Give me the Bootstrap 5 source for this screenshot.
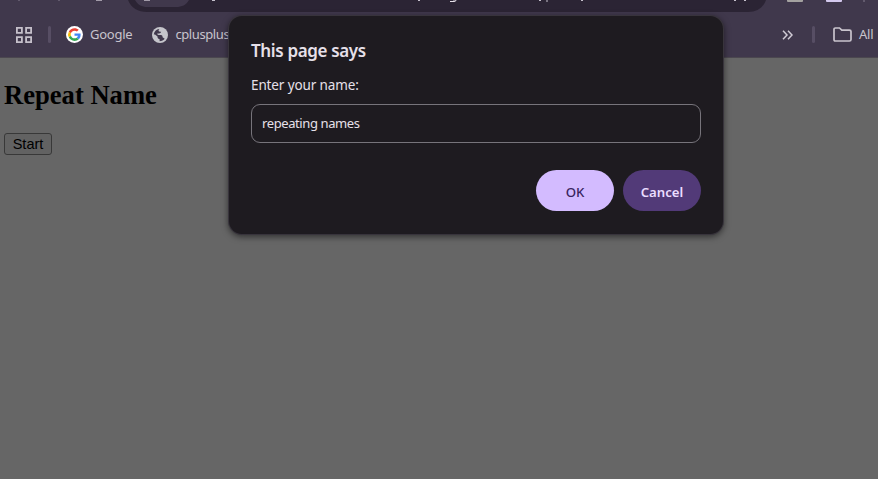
<!DOCTYPE html>
<html lang="en">
<head>
<meta charset="utf-8">
<meta name="viewport" content="width=device-width, initial-scale=1">
<title>Repeat Name</title>
<link href="https://cdn.jsdelivr.net/npm/bootstrap@5.3.0/dist/css/bootstrap.min.css" rel="stylesheet">
<style>
body{height:479px;background:#666;font-family:"Noto Sans","Open Sans",sans-serif;font-size:13px;color:#c8c4cd}
.browser-bar{height:58px;background:#40384c;border-bottom:1px solid #4b474f}
.toolbar-strip{height:12px;flex:none}
.toolbar-strip svg,.bookmark-row svg{display:block;flex:none}
.bookmark-row{height:45px;padding-left:16px}
.bookmark-label{font-size:13px;line-height:18px;white-space:nowrap;letter-spacing:-.25px;margin-left:7px;padding-bottom:2px}
.bookmark-label.site{letter-spacing:-.4px}
.bar-split{width:3px;height:17px;border-radius:2px;background:#574e64;flex:none}
.google-icon{margin-left:15px}
.site-icon{margin-left:20px}
.bookmark-end{width:96px}
.end-split{margin-left:19px}
.folder-icon{margin-left:18px}
.page-body{padding:21px 4px}
.page-body h2{font:bold 26.6px/32px "Liberation Serif",serif;color:#000;margin:0 0 22px}
.start-btn{font:14.5px/18px "Liberation Sans",sans-serif;color:#000;background:#626262;border:1px solid #383838;border-radius:3px;width:48px;height:22px;padding:0 0 1px}
.prompt{position:absolute;left:229px;top:16px;width:494px;height:218px;background:#1e1b20;border-radius:13px;padding:23px 22px;box-shadow:0 0 0 1px #38343c,0 2px 6px 1px rgba(0,0,0,.5);color:#e6e0e9}
.prompt h1{font-size:17px;line-height:24px;font-weight:600;letter-spacing:-.35px;margin:0 0 12px}
.prompt label{font-size:13.5px;line-height:20px;letter-spacing:-.12px;display:block}
.prompt .form-control{height:39px;background:transparent;border:1px solid #77747b;border-radius:9px;color:#e6e0e9;font-size:13px;letter-spacing:-.4px;padding:0 10px 2px;margin-top:9px;box-shadow:none}
.prompt-actions{gap:9px;margin-top:27px}
.prompt .btn{width:78px;height:41px;font-size:13.2px;font-weight:600;padding:4px 0 0;border:0}
.prompt .ok-btn{font-weight:500}
.ok-btn,.ok-btn:hover{background:#d3bbff;color:#38245e}
.cancel-btn,.cancel-btn:hover{background:#523a78;color:#eadcff}
</style>
<script src="https://cdn.jsdelivr.net/npm/bootstrap@5.3.0/dist/js/bootstrap.bundle.min.js"></script>
</head>
<body class="overflow-hidden m-0">
<header class="browser-bar d-flex flex-column">
<div class="toolbar-strip">
<svg width="878" height="12">
<path d="M128 0C131 8 138 12 147 12H748C757 12 763 8 766 0Z" fill="#2b2434"/>
<path d="M135 0C138 5 142 7 147 7H176C182 7 186 5 189 0Z" fill="#40384c"/>
<path d="M96 0h6M144 0h6" stroke="#a29ba9" stroke-width="2"/>
<path d="M18 .5h2M58 .5h2" stroke="#625a6d"/>
<path d="M212 .5h3M418 .5h2M454 0v1M539 .5h2M547 0v2M581 .5h2M734 .5h2M744 .5h2" stroke="#c5c0cc" stroke-width="1"/>
<path d="M450 1.500h4q2 0 2-1.500" fill="none" stroke="#e6e0e9"/>
<rect x="787" y="-1" width="16" height="3" rx="1" fill="#a4a2a0"/><rect x="826" y="-1" width="16" height="3" rx="1" fill="#d4c9ee"/><rect x="863" width="2" height="2" fill="#625a6d"/>
</svg>
</div>
<nav class="bookmark-row d-flex align-items-center" aria-label="Bookmarks">
<svg width="16" height="16" fill="none" stroke="#c5c0ca" stroke-width="1.800"><path d="M.9.9h5v5h-5zM10.100.9h5v5h-5zM.9 10.100h5v5h-5zM10.100 10.100h5v5h-5z"/></svg>
<span class="bar-split ms-3"></span>
<svg class="google-icon" width="17" height="17" viewBox="0 0 48 48"><circle cx="24" cy="24" r="24" fill="#fff"/><g transform="translate(6 6) scale(.75)"><path fill="#EA4335" d="M24 9.500c3.500 0 6.700 1.200 9.200 3.600l6.900-6.900C35.900 2.400 30.500 0 24 0 14.600 0 6.500 5.400 2.600 13.200l8 6.200C12.400 13.700 17.700 9.500 24 9.500z"/><path fill="#4285F4" d="M47 24.600c0-1.600-.2-3.100-.4-4.600H24v9h12.900c-.6 3-2.200 5.500-4.700 7.200l7.700 6C44.400 38 47 31.800 47 24.600z"/><path fill="#FBBC05" d="M10.500 28.600a14.500 14.500 0 0 1 0-9.200l-8-6.200a24 24 0 0 0 0 21.600z"/><path fill="#34A853" d="M24 48c6.500 0 11.900-2.100 15.900-5.800l-7.700-6c-2.200 1.500-4.900 2.300-8.200 2.300-6.300 0-11.600-4.200-13.500-9.900l-8 6.200C6.500 42.600 14.600 48 24 48z"/></g></svg>
<span class="bookmark-label">Google</span>
<svg class="site-icon" width="16" height="16" viewBox="0 0 16 16"><circle cx="8" cy="8" r="8" fill="#c5c5cb"/><path d="M1.800 7.500C2 4.400 4.200 2.200 7.300 1.900L6.500 3.600Q6.500 4.700 8 4.800H9.200Q8.800 6.400 7 6.500H5.200Q5.300 8 6.800 8H9.200Q10.800 8.200 10.600 10.200L12.700 11.700C11.500 13.300 9.800 14.200 7.600 14.200V12.200Q5.500 12 5.500 10.300V9.500L3 7.500Z" fill="#40384c"/></svg>
<span class="bookmark-label site">cplusplus</span>
<div class="bookmark-end d-flex align-items-center ms-auto">
<svg width="11" height="10" fill="none" stroke="#d0cbd5" stroke-width="1.500"><path d="M1 .8L5 5 1 9.200M6 .8L10 5 6 9.200"/></svg>
<span class="bar-split end-split"></span>
<svg class="folder-icon" width="19" height="15" fill="none" stroke="#c9c4cd" stroke-width="1.700"><path d="M1 2.300Q1 1 2.300 1H6.500L8.800 3.200H16.500Q18 3.200 18 4.500V12.500Q18 14 16.500 14H2.300Q1 14 1 12.500Z"/></svg>
<span class="bookmark-label">All</span>
</div>
</nav>
</header>
<main class="page-body"><h2>Repeat Name</h2><button class="start-btn">Start</button></main>
<section class="prompt" role="dialog"><h1>This page says</h1><label for="nm">Enter your name:</label><input id="nm" class="form-control" value="repeating names"><div class="prompt-actions d-flex justify-content-end"><button class="btn rounded-pill ok-btn">OK</button><button class="btn rounded-pill cancel-btn">Cancel</button></div></section>
</body>
</html>
